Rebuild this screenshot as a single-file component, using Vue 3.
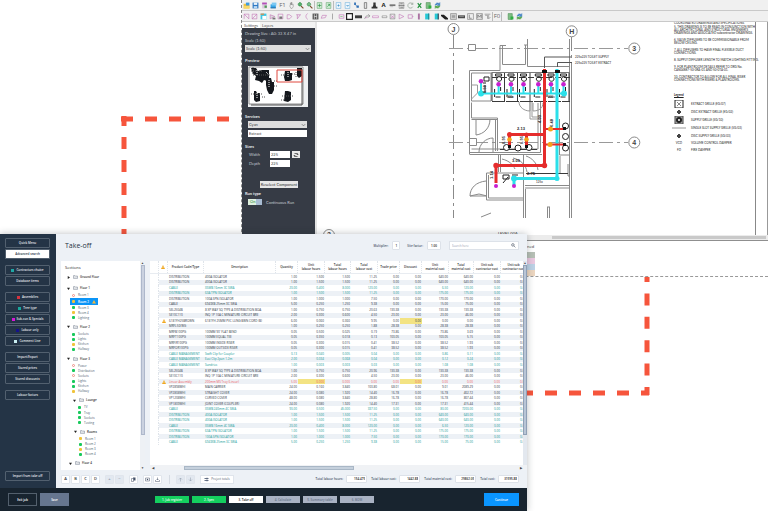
<script setup>
const fileTools = [
  { n: 'Open', s: [['M1 3h4l1 2h5v6H1z', '#f3c33c'], ['M5 1h6v5H5z', '#3c9be0'], ['M2 7h9v4H1z', '#f7d96a']] },
  { n: 'Save', s: [['M1 1h10v10H1z', '#2f79c4'], ['M3 1h6v4H3z', '#e8f2fb'], ['M3 7h6v4H3z', '#bcd9f2']] },
  { n: 'Sheet', s: [['M2 1h8v10H2z', '#d9c8dc'], ['M2 1h8v3H2z', '#b44fb8'], ['M6 6h4v4H6z', '#4e9a55']] },
  { n: 'Project folder', s: [['M1 4h9v6H1z', '#37a5e6'], ['M3 1h8v5H3z', '#7cc8f2'], ['M1 9h9v2H1z', '#1c6fae']] },
  { n: 'F1', t: 'F1' },
  { n: 'Pan', s: [['M4 5V2h1v3V1h1v4V1h1v4l2-1v4l-2 3H5L3 7z', 'none', '#8d8d8d']] },
  { n: 'Zoom in', s: [['M5 1a3 3 0 1 0 .1 0z', '#55b169', '#2b7d42'], ['M7 7l4 4', 'none', '#7b4a2a', 2]] },
  { n: 'Zoom out', s: [['M5 1a3 3 0 1 0 .1 0z', '#7cc08a', '#2b7d42'], ['M7 7l4 4', 'none', '#7b4a2a', 2]], sep: 1 },
  { n: 'Import', s: [['M2 1h8v10H2z', '#cdebd2', '#6aa974'], ['M3 6h6M6 3v6', 'none', '#1f8a3a']] },
  { n: 'Export', s: [['M2 1h8v10H2z', '#cdebd2', '#6aa974'], ['M4 8l4-4M5 4h3v3', 'none', '#1f8a3a']], sep: 1 },
  { n: 'Page', s: [['M2 1h8v10H2z', '#eef7fd', '#6fb2dd'], ['M4 6h4M6 4v4', 'none', '#2d86c4']] },
  { n: 'Next page', s: [['M2 1h8v10H2z', '#eef7fd', '#6fb2dd'], ['M4 6h4l-2 2', 'none', '#2d86c4']] },
  { n: 'Trace', s: [['M2 1h3v4H2zM6 6h4v4H6z', '#2f6fb4'], ['M4 5l4 3', 'none', '#2f6fb4']] },
  { n: 'Column', s: [['M4 1h4v10H4z', '#e3e3e3', '#4a4a4a']] },
  { n: 'Stamp', s: [['M4 1h4v4l1 3h2v3H1V8h2l1-3z', '#333']] },
  { n: 'Text', t: 'A', b: 1 },
  { n: 'Keyboard', s: [['M1 4h10v3H1z', '#777'], ['M2 8h5', 'none', '#aaa']] },
  { n: 'Print', s: [['M2 1h8v10H2z', '#ddd', '#888'], ['M1 6h10M4 3h4M4 9h5', 'none', '#555']] },
  { n: 'Refresh', s: [['M10 4A4.500 4.500 0 1 0 10 8M10 1v3H7', 'none', '#7c8f82']] },
  { n: 'Excel', s: [['M3 2l6 8M9 2l-6 8', 'none', '#23913f', 2]] },
  { n: 'Add sheet', s: [['M2 1h7v10H2z', '#7fbf85', '#4d8d54'], ['M6 6h5v5H6z', '#2fae42']] },
  { n: 'Sync', s: [['M2 6a4 4 0 0 1 7-3l1-2v5H6l2-2', '#3f7fc4', '#3f7fc4'], ['M10 6a4 4 0 0 1-7 3l-1 2V7h4L4 8', '#57a84d', '#57a84d']] }
]
const P = '#c06fb4'
const G = '#777'
const duct = [
  [['M2 10V2h8v8M2 2l8 8', 'none', P]], [['M2 10V2h8v8zM2 10l8-8', 'none', P]],
  [['M1 1h10v10H1z', '#3fc8e4'], ['M4 5h7v6H4z', '#fff'], ['M1 1h6v2H1z', '#e8863c']],
  [['M2 3l8 3-8 4z', '#ddd', P], ['M6 8h5v3H6z', G]], [['M2 2h8v8H2z', 'none', P], ['M4 6h5v4H4z', G]],
  [['M2 3h4l4 3-4 4H2z', 'none', P]], [['M2 3h8M4 3v7l5-7', 'none', P]], [['M8 1C4 3 4 8 8 11', 'none', P]],
  [['M1 1h10v10H1z', '#555'], ['M4 2v8M8 2v8M4 6h4', 'none', '#fff']],
  [['M2 9l2-5h7l-2 4z', 'none', P]], [['M6 1v10', 'none', G]], [['M2 3h8v6H2z', 'none', P], ['M4 6h4', 'none', '#6a6']],
  [['M1 1h10v10H1z', '#fff', '#222', 2]], [['M0 4h12v5H0z', '#3c3c3c']],
  [['M1 10l3-5h6M7 2l3 3-3 3', 'none', G], ['M2 8h4', 'none', P]], [['M1 5h10v3H1z', '#fff', P]],
  [['M2 5h8v3H2z', '#fff', G]], [['M2 2h8v8H2z', 'none', G], ['M3 4l6 5M3 9l6-5', 'none', P]],
  [['M2 2l8 4-8 4z', 'none', P]], [['M2 3h7v6H2zM9 6h2', 'none', P]], [['M5 1h3v10H5z', P], ['M7 1v10', 'none', G]],
  [['M2 1h7v10H2z', '#27c9d6'], ['M7 1h2v10H7z', '#238a94']], [['M3 1h6v10H3z', '#27c9d6'], ['M8 1h2v10H8z', '#345']],
  [['M0 3h5l7 6v2H7L0 5z', '#1f1f1f']], [['M1 1h10v10H1z', '#ddd', G], ['M3 4h6M3 6h6M3 8h6', 'none', G]],
  [['M0 4h12v5H0z', '#4c4c4c'], ['M2 6h8', 'none', '#aaa']], [['M1 1h10v10H1z', '#eee', G], ['M4 3v6h4', 'none', '#555']],
  [['M1 1h10v10H1z', '#e4e4e4', G], ['M3 9V3l3 4 3-4v6', 'none', '#555']], [['M1 2h10M2 4h4v6M8 3v7l3-3', 'none', G]]
]
const exportTools = [
  { n: 'Export list', s: [['M2 1h7v10H2z', '#7fbf85', '#4d8d54'], ['M6 6h5v5H6z', '#2fae42']] },
  { n: 'Update', s: [['M2 6a4 4 0 0 1 7-3l1-2v5H6l2-2', '#3f7fc4', '#3f7fc4'], ['M10 6a4 4 0 0 1-7 3l-1 2V7h4L4 8', '#57a84d', '#57a84d']] }
]

const notes = [
  ['COORDINATED DRAWINGS AND SPECIFICATIONS.'],
  ['5. THIS DRAWING IS TO BE READ IN CONJUNCTION WITH', 'ALL ARCHITECTURAL AND STRUCTURAL ENGINEER\'S', 'DRAWINGS AND ASSOCIATED subcontractor DRAWINGS.'],
  ['6. VALVE DIFFUSERS TO BE COMMISSIONABLE FROM', 'BELOW CEILING.'],
  ['7. ALL DIFFUSERS TO HAVE FINAL FLEXIBLE DUCT', 'CONNECTIONS.'],
  ['8. SUPPLY DIFFUSER LENGTH TO MATCH LIGHTING FITTING.'],
  ['9. FOR PLANTROOM DETAILS REFER TO DRG No.', 'CAN04887-50-0RA-01 AND 50-0TA-01.'],
  ['10. CONTRACTOR TO ALLOW FOR ALL FINAL RISER', 'CONNECTIONS WITH RISERS & PLANTROOMS.']
]
const legend = [
  ['box', 'EXTRACT GRILLE (EG/07)'], ['plus', 'DISC EXTRACT GRILLE (EG/02)'], ['star', 'SUPPLY GRILLE (SG/10)'],
  ['slot', 'SINGLE SLOT SUPPLY GRILLE (SG/03)'], ['plus', 'DISC SUPPLY GRILLE (SG/03)'],
  ['VCD', 'VOLUME CONTROL DAMPER'], ['FD', 'FIRE DAMPER']
]
const grilles = [498.6, 511, 523.5, 538.3, 551, 563.5]
const partitions = [492, 504.5, 517.5, 530, 545, 557, 569]

const menu = [
  [{ t: 'Quick Menu' }, { t: 'Advanced search', on: 1 }],
  [{ t: 'Contractors choice', c: '#1fa7a4' }, { t: 'Database items' }],
  [{ t: 'Assemblies', c: '#d5333f' }, { t: 'Tree type', c: '#19a79b' }, { t: 'Sub-con & Specials', c: '#d816d8' }, { t: 'Labour only', c: '#16138c' }, { t: 'Comment Line', c: '#c9eef2' }],
  [{ t: 'Import/Export' }, { t: 'Stored prices' }, { t: 'Stored discounts' }],
  [{ t: 'Labour factors' }]
]
const tree = [
  ['f', 0, 'Ground Floor', 'shut'], ['f', 0, 'Floor 1'], ['r', 0, 'Room 1'], ['sel', 0, 'Room 2'], ['g', 0, 'Room 3'], ['y', 0, 'Room 4'], ['g', 0, 'Lighting'],
  ['f', 0, 'Floor 2'], ['g', 0, 'Sockets'], ['g', 0, 'Lights'], ['y', 0, 'Kitchen'], ['g', 0, 'Hallway'],
  ['f', 0, 'Floor 3'], ['r', 0, 'Power'], ['g', 0, 'Distribution'], ['r', 0, 'Sockets'], ['g', 0, 'Lights'], ['g', 0, 'Kitchen'], ['y', 0, 'Hallway'],
  ['f', 2, 'Lounge'], ['g', 2, 'TV'], ['g', 2, 'Tray'], ['g', 2, 'Sockets'], ['g', 2, 'Testing'],
  ['f', 3, 'Rooms'], ['y', 3, 'Room 1'], ['g', 3, 'Room 2'], ['y', 3, 'Room 3'], ['g', 3, 'Room 4'],
  ['f', 1, 'Floor 4']
]
const heads = ['Product Code/Type', 'Description', 'Quantity', 'Unit\nlabour hours', 'Total\nlabour hours', 'Total\nlabour cost', 'Trade price', 'Discount', 'Unit\nmaterial cost', 'Total\nmaterial cost', 'Unit sub\ncontractor cost', 'Unit sub\ncontractor cost']
const raw = `|DISTRIBUTION|400A ISOLATOR|1.00|1.500|1.500|11.25|0.00|0.00|640.00|640.00
|DISTRIBUTION|400A ISOLATOR|1.00|1.500|1.500|11.25|0.00|0.00|640.00|640.00
t|CABLE|XSWB 16mm 3C SWA|20.00|0.400|8.000|120.00|0.00|0.00|6.50|120.00
t|DISTRIBUTION|63A TPN ISOLATOR|1.00|1.500|1.500|11.25|0.00|0.00|175.00|175.00
|DISTRIBUTION|100A SPN ISOLATOR|1.00|1.000|1.000|7.50|0.00|0.00|170.00|170.00
|CABLE|6943XB 25mm 3C SWA|5.00|0.250|1.250|9.38|0.00|0.00|15.00|75.00
|SEL2504B|8 XP WAY SQ TYPE A DISTRIBUTION BOA|1.00|0.750|0.750|20.63|130.38|0.00|130.38|130.38
|SE10C110|INQ 1P 10A C MINIATURE CIRCUIT BRE|2.00|0.300|0.600|4.50|23.00|0.00|23.00|46.00
w|6181YH25BROWN|6181YH 25MM PVC LUNG BWN CORD (B)|6.00|0.060|0.360|9.95|0.00|*0.00|0.00|0.00
|MRFL50/WG||1.00|0.250|0.250|1.88|28.38|0.00|28.38|28.38
|MRFB100PG|100MM 90' FLAT BEND|0.05|0.500|0.025|0.19|73.86|0.00|73.86|3.69
|MRFT100PG|100MM EQUAL TEE|0.05|0.350|0.018|0.13|103.05|0.00|103.05|5.15
|MRFIR100PG|100MM INSIDE RISER|0.05|0.300|0.015|0.41|38.52|0.00|38.52|1.93
|MRFOR100PG|100MM OUTSIDE RISER|0.05|0.300|0.015|0.41|38.52|0.00|38.52|1.93
t|CABLE MANAGEMENT|Swift Clip for Coupler|0.13|0.040|0.005|0.04|0.00|0.00|0.86|0.11
t|CABLE MANAGEMENT|Easi Clip 2pan 1.2m|2.00|0.034|0.068|0.04|0.00|0.00|0.12|0.24
t|CABLE MANAGEMENT|Sundries|1.00|0.003|0.003|0.03|0.00|0.00|1.08|1.08
|SEL2504B|8 XP WAY SQ TYPE A DISTRIBUTION BOA|1.00|0.750|0.750|20.96|130.38|0.00|130.38|130.38
|SE10C110|INQ 1P 10A C MINIATURE CIRCUIT BRE|2.00|0.300|0.600|4.50|23.00|0.00|23.00|46.00
e|Linear Assembly|200mm MS Tray (Linear)|5.00|*0.000|0.000|0.00|0.00|*0.00|0.00|0.00
|VP2898WHI|MAIN CARRIER|24.00|0.160|3.840|103.80|68.01|0.00|9.01|2089.29
|VP2808WHI|STRAIGHT COVER|24.00|0.080|1.920|14.40|16.78|0.00|16.78|402.72
|VP1208WHI|CURVED COVER|48.00|0.080|3.840|28.80|16.78|0.00|16.78|807.44
|VP1809WHI|JOINT COVER (COUPLER)|24.00|0.080|1.920|14.40|17.31|0.00|17.31|415.44
t|CABLE|XSWB 240mm 4C SWA|90.00|0.500|45.000|337.50|0.00|0.00|80.00|7200.00
t|DISTRIBUTION|400A ISOLATOR|1.00|1.500|1.500|11.25|0.00|0.00|640.00|640.00
t|DISTRIBUTION|400A ISOLATOR|1.00|1.500|1.500|11.25|0.00|0.00|640.00|640.00
t|CABLE|XSWB 16mm 4C SWA|20.00|0.400|8.000|120.00|0.00|0.00|6.50|120.00
t|DISTRIBUTION|63A TPN ISOLATOR|1.00|1.500|1.500|11.25|0.00|0.00|175.00|175.00
t|DISTRIBUTION|100A SPN ISOLATOR|1.00|1.000|1.000|7.50|0.00|0.00|170.00|170.00
t|CABLE|6943XB 25mm 3C SWA|5.00|0.250|1.250|9.38|0.00|0.00|15.00|75.00`
const rows = raw.split('\n').map((line) => {
  const [kind, ...cells] = line.split('|')
  return { kind, cells: [...cells, '0.00', '0.00'] }
})
const totals = [['Total labour hours:', '154.475'], ['Total labour cost:', '1442.88'], ['Total material cost:', '29862.05'], ['Total cost:', '31595.88']]
const steps = [['1. Job register', 'done'], ['2. Spec', 'done'], ['3. Take off', 'now'], ['4. Calculate', ''], ['5. Summary table', ''], ['6. BOM', '']]
</script>

<template>
  <main class="stage">
    <svg class="frame" width="530" height="280" viewBox="0 0 530 280" aria-hidden="true">
      <g fill="none" stroke="#f6553c" stroke-width="5">
        <path d="M0 3H525" stroke-dasharray="12 12" stroke-dashoffset="0" />
        <path d="M3 0V280" stroke-dasharray="12 11" stroke-dashoffset="2" />
        <path d="M528 277H0" stroke-dasharray="12 12" stroke-dashoffset="4" />
        <path d="M526 279V0" stroke-dasharray="12 11.400" stroke-dashoffset="4" />
      </g>
    </svg>

    <section class="cad">
      <div class="bar">
        <template v-for="k in fileTools" :key="k.n">
          <button class="tool" :class="{ sep: k.sep }" :aria-label="k.n">
            <span v-if="k.t" class="glyph" :class="{ heavy: k.b }">{{ k.t }}</span>
            <svg v-else viewBox="0 0 12 12"><path v-for="(p, i) in k.s" :key="i" :d="p[0]" :fill="p[1]" :stroke="p[2] || 'none'" :stroke-width="p[3] || 1" /></svg>
          </button>
        </template>
      </div>
      <div class="bar">
        <div class="ducts">
          <button v-for="(s, j) in duct" :key="j" class="tool" :aria-label="'Duct tool ' + (j + 1)">
            <svg viewBox="0 0 12 12"><path v-for="(p, i) in s" :key="i" :d="p[0]" :fill="p[1]" :stroke="p[2] || 'none'" :stroke-width="p[3] || 1" /></svg>
          </button>
        </div>
        <button class="tool boxed"><span class="glyph">F0</span></button>
        <button v-for="k in exportTools" :key="k.n" class="tool" :aria-label="k.n">
          <svg viewBox="0 0 12 12"><path v-for="(p, i) in k.s" :key="i" :d="p[0]" :fill="p[1]" :stroke="p[2] || 'none'" /></svg>
        </button>
      </div>

      <div class="work">
        <aside class="settings">
          <div class="tabs"><button class="tab on">Settings</button><button class="tab">Layers</button></div>
          <form class="panel" @submit.prevent>
            <p>Drawing Size : A0: 33 X 47 in</p>
            <label for="scale">Scale (1:50)</label>
            <span class="drop wide"><select id="scale"><option>Scale (1:50)</option></select><svg viewBox="0 0 6 4"><path d="M1 1l2 2 2-2" fill="none" stroke="#777" /></svg></span>
            <h3 class="mt">Preview</h3>
            <svg class="thumb" viewBox="0 0 60 41">
              <path d="M0 0h60v41H0z" fill="#eef0f2" /><path d="M1 1h54v37H1z" fill="#fff" stroke="#8c8c8c" />
              <path d="M3 39h51M54 3v36" stroke="#555" fill="none" />
              <g fill="#15181d">
                <path d="M3 2h5l2 3 4-1 7 0v9l-2 2-3-1-2 3-3-2-4-1 1-4-3-2zM18 12h5l1 4h2v8l-2 4h-3l-2-4-1-5z" />
                <path d="M37 5h5v2h2v7l-3 1h-4l-1-4zM49 2h5v8l-3 2-2-2zM6 25h2l1 2h3v8l-4 1-2-2zM37 25h3l3 1v8l-3 2-4-1z" />
              </g>
              <g stroke="#555" stroke-width="1" stroke-dasharray="1 1"><path d="M3 5h12M5 9h17M26 15h4M26 20h4M33 9h3M44 8h4M3 28h12M34 30h12M33 34h3M14 31h3M48 6v6M5 1v8" /></g>
              <path d="M18 6l3 3M9 4v6M40 6v6M9 27v5M21 14v8" stroke="#fff" stroke-dasharray="1 1" />
              <path d="M29 4h25v12H29z" fill="none" stroke="#e0483e" />
            </svg>
            <h3 class="services">Services</h3>
            <span class="drop"><select aria-label="Colour"><option>Cyan</option></select><svg viewBox="0 0 6 4"><path d="M1 1l2 2 2-2" fill="none" stroke="#777" /></svg></span>
            <input class="line" aria-label="Service" value="Extract" />
            <h3 class="mt">Sizes</h3>
            <div class="size"><label for="w">Width</label><input id="w" value="225" /><button class="swap" aria-label="Swap"><svg viewBox="0 0 8 8"><path d="M2 2h4v2M6 6H2V4M5 3l1 1 1-1M1 5l1-1 1 1" fill="none" stroke="#444" /></svg></button></div>
            <div class="size"><label for="d">Depth</label><input id="d" value="225" /></div>
            <button class="reselect">Reselect Component</button>
            <h3>Run type</h3>
            <div class="run"><button class="toggle" aria-labelledby="runl">On</button><span id="runl">Continuous Run</span></div>
          </form>
        </aside>

        <div class="sheet">
          <svg class="plan" width="350" height="214" viewBox="317 21 350 214">
            <g fill="none" stroke="#8a8a8a" stroke-width="1">
              <g stroke-dasharray="14 4 3 4">
                <path d="M453.500 34V217M571.500 36V217" stroke="#8a8a8a" /><path d="M449 47.500H628M449 141.500H628" stroke="#999" />
              </g>
              <g fill="#fff"><circle cx="453.500" cy="28" r="5.500" /><circle cx="571.700" cy="30.300" r="5.500" /><circle cx="634.300" cy="47.500" r="5.500" /><circle cx="634.300" cy="141.500" r="5.500" /><circle cx="329" cy="234" r="5.500" /><path d="M468.500 43.500h7v6h-7zM469.500 137.500h7v7h-7z" /></g>
              <path d="M506 44.500H500V69.500H469.500V153M502.500 44.500V63.500H525.500V44M527.500 38V65.500H570M524 44h3M569.500 38V217M571.500 66V217" />
              <path d="M469.500 151.500H540.500V101M471.500 148H538V102M469.500 153.500H542M471.500 72H491V100H471.500zM471.500 101.500V117H497.500V150M495.500 119V150M471.500 118.500H497" />
              <path d="M471.500 84h6v8l-6 6M519 101c0 5 5 9 11 9v-9M533 102v8c6 0 10-3 10-8M530 101V118H540M532 101V116H541" stroke="#999" />
              <path d="M476 118v16c8-1 14-7 14-16M479 151c0-8 7-14 14-14v14M486.500 172V199H523M488.500 174V197H523M486.500 172H523M523.500 153V217M525.500 188V217M500.500 153V171M498.500 153V171M525 184.500H570M525 187H570M470 195c0-8 6-14 16-15M470 195h17l-8-2-9 2M513 157c8 2 13 7 14 14M526 155c6 2 11 7 12 14M547.500 206V217M549.500 206V217M547 206h3M481 216l10-4M502 158c8 2 11 6 13 10M559.500 118V154M559.500 154H570M560 155V172M568 163v12h2" />
              <path d="M544.500 67V56H571M557.500 66V61.500H572" stroke="#555" />
            </g>
            <g stroke="#3a3a3a" fill="none">
              <path v-for="x in partitions" :key="x" :d="`M${x} 71V100`" />
              <path d="M492 71.500H570" stroke="#777" /><path d="M492 76.500H570" stroke-dasharray="6 3" /><path d="M492 100.500H570" stroke-dasharray="13 1" />
              <path d="M526 172.500H568M500 148.500H537" />
              <g stroke="#222"><path v-for="x in grilles" :key="x" :d="`M${x - 3} 73h6v2h-6zM${x - 2} 78c0-3 5-3 5 0s-5 3-5 0M${x + 2} 86v4M${x - 4} 88v8M${x - 3} 96h5`" /></g>
              <path d="M484 76h5v4h-5zM485 84v8M483 82h3M503 174h6v4h-6zM512 174h6M503 182l5-6" stroke="#222" />
              <g stroke="#222" fill="#fff"><circle cx="506.500" cy="146.500" r="3" /><circle cx="518" cy="147" r="3" /><circle cx="529" cy="146.500" r="3" /><circle cx="565.500" cy="125" r="3" /><circle cx="565.500" cy="135.500" r="3" /><circle cx="565.500" cy="147" r="3" /></g>
            </g>
            <g fill="none" stroke="#2be0ea" stroke-width="3">
              <path d="M557 68V177.500H514V185" /><path d="M481 80V92.500H566" stroke-width="2" />
              <path v-for="x in grilles" :key="x" :d="`M${x} 84V92`" stroke-width="2" />
            </g>
            <g fill="#2be0ea"><circle cx="481" cy="92.500" r="3" /><circle cx="514" cy="177.500" r="3" /><circle cx="557" cy="177.500" r="2.500" /><circle cx="564" cy="92.500" r="3" /></g>
            <g fill="none" stroke="#e52c2c" stroke-width="3"><path d="M544.500 68V164.500H496V182M544 133.500H509.500V145M526.500 133V145" /><path d="M545 128H565M545 143.500H565" stroke-width="2" /></g>
            <g fill="#e52c2c"><circle cx="496" cy="164.500" r="2.700" /><circle cx="544.500" cy="164.500" r="2.700" /><circle cx="509.500" cy="133.500" r="2.500" /><circle cx="526.500" cy="133.500" r="2" /></g>
            <g fill="#f5a21b"><circle cx="509.500" cy="138.500" r="2.300" /><circle cx="526.500" cy="138.500" r="2.300" /><circle cx="550.500" cy="128" r="2.500" /><circle cx="550" cy="143.500" r="2.500" /></g>
            <g fill="#111"><path d="M508 144h3v3h-3zM525 144h3v3h-3zM563 126h3v3h-3zM563 142h3v3h-3zM542 69h5v3h-5zM555 69h5v3h-5z" /></g>
            <g fill="#c81fd0"><circle cx="481" cy="80.300" r="2.300" /><circle v-for="x in grilles" :key="x" :cx="x" cy="83.300" r="2.300" /><circle cx="496" cy="185" r="2" /><circle cx="514" cy="185" r="2" /></g>
            <g class="bubble"><text x="453.500" y="31">J</text><text x="571.700" y="33">H</text><text x="634.300" y="50">3</text><text x="634.300" y="144">4</text><text x="329" y="236">2</text></g>
            <g class="dims"><text x="521" y="129">2.13</text><text x="516" y="161">3.09</text><text x="531" y="174">2.75</text></g>
            <g class="dims" transform="rotate(-90 541 118)"><text x="541" y="118">4.03</text></g>
            <g class="dims" transform="rotate(-90 553 122)"><text x="553" y="122">6.48</text></g>
            <g class="dims" transform="rotate(-90 493 174)"><text x="493" y="174">1.14</text></g>
            <g class="dims" transform="rotate(-90 486 88)"><text x="486" y="88">0.50</text></g>
            <g class="dims" transform="rotate(-90 505 139)"><text x="505" y="139">0.95</text></g>
            <g class="dims" transform="rotate(-90 523 139)"><text x="523" y="139">0.95</text></g>
            <g class="tag"><text x="575" y="57">225x225 TOILET SUPPLY</text><text x="575" y="63">225x225 TOILET EXTRACT</text><text x="536" y="182">125x</text><text x="507" y="97">200x</text><text x="548" y="97">200x</text></g>
            <text class="level" x="498" y="234">LEVEL 00A</text>
          </svg>
          <div class="notes">
            <p v-for="(n, i) in notes" :key="i"><span v-for="l in n" :key="l">{{ l }}</span></p>
            <h4>Legend</h4>
            <dl>
              <div v-for="(l, i) in legend" :key="i">
                <dt>
                  <svg v-if="l[0] === 'box'" viewBox="0 0 14 8"><path d="M3 0h8v8H3z" fill="#fff" stroke="#222" /><path d="M5 2l4 4M9 2L5 6" stroke="#888" /></svg>
                  <svg v-else-if="l[0] === 'star'" viewBox="0 0 14 8"><path d="M3 0h8v8H3z" fill="#aaa" stroke="#444" /><circle cx="7" cy="4" r="3" fill="#222" /><circle cx="7" cy="4" r="1" fill="#fff" /></svg>
                  <svg v-else-if="l[0] === 'plus'" viewBox="0 0 14 8"><path d="M7 2v4M5 4h4" stroke="#444" stroke-width="2" /></svg>
                  <svg v-else-if="l[0] === 'slot'" viewBox="0 0 14 8"><path d="M0 3h14v2H0z" fill="#ccc" stroke="none" /></svg>
                  <template v-else>{{ l[0] }}</template>
                </dt>
                <dd>{{ l[1] }}</dd>
              </div>
            </dl>
          </div>
          <div class="edge"></div>
        </div>
      </div>
      <div class="hscroll"><i></i></div>
      <div class="below"><span>ned</span><i class="a"></i><i class="b"></i><i class="c"></i><i class="d"></i></div>
    </section>

    <section class="takeoff">
      <nav class="side">
        <div v-for="(g, i) in menu" :key="i" class="group">
          <button v-for="m in g" :key="m.t" :class="{ on: m.on }"><i v-if="m.c" :style="{ background: m.c }"></i>{{ m.t }}</button>
        </div>
        <button class="last">Import from take off</button>
      </nav>

      <div class="body">
        <header>
          <h1>Take-off</h1>
          <label for="mul">Multiplier:</label><input id="mul" class="mul" value="1" />
          <label for="sf">Site factor:</label><input id="sf" class="sf" value="1.00" />
          <div class="search"><input aria-label="Search" placeholder="Search here" /><svg viewBox="0 0 8 8"><circle cx="3" cy="3" r="2" fill="none" stroke="#3f4a5c" /><path d="M5 5l2 2" stroke="#3f4a5c" /></svg></div>
        </header>

        <div class="content">
          <div class="sections">
            <div class="treebox">
              <h2>Sections</h2>
              <ul>
                <li v-for="(n, i) in tree" :key="i" :class="['k-' + n[0], 'in' + n[1]]">
                  <template v-if="n[0] === 'f'">
                    <svg class="arrow" viewBox="0 0 4 4"><path :d="n[3] ? 'M1 0l3 2-3 2z' : 'M0 1h4L2 4z'" fill="#222" /></svg>
                    <svg class="folder" viewBox="0 0 10 8"><path d="M1 7V1h3l1 1h4v5z M1 4h8" fill="#fff" stroke="#7a8495" /></svg>{{ n[2] }}
                  </template>
                  <span v-else-if="n[0] === 'sel'" class="pick"><i></i>{{ n[2] }}<svg viewBox="0 0 8 8"><path d="M4 0l4 7H0z" fill="#f6b73c" /></svg></span>
                  <template v-else><i></i>{{ n[2] }}</template>
                </li>
              </ul>
            </div>
            <div class="vbar"><b>▲</b><i></i><b>▼</b></div>
          </div>

          <div class="gridbox">
            <div class="gridtop">
              <table>
                <thead>
                  <tr><th></th><th><svg class="warn" viewBox="0 0 8 8"><path d="M4 0l4 8H0z" fill="#f0a71e" /><path d="M4 3v3" stroke="#fff" /></svg></th><th v-for="(h, i) in heads" :key="i">{{ h }}</th></tr>
                </thead>
                <tbody>
                  <tr v-for="(r, i) in rows" :key="i" :class="'r' + r.kind">
                    <td></td>
                    <td><svg v-if="r.kind === 'w' || r.kind === 'e'" class="warn" viewBox="0 0 8 8"><path d="M4 0l4 8H0z" fill="#f0a71e" /><path d="M4 3v3" stroke="#fff" /></svg></td>
                    <td v-for="(c, j) in r.cells" :key="j" :class="{ flag: c[0] === '*' }">{{ c.replace('*', '') }}</td>
                  </tr>
                </tbody>
              </table>
              <div class="vbar slim"><b>▲</b><i></i></div>
            </div>
            <div class="hbar"><b>◀</b><i></i><b>▶</b></div>
          </div>
        </div>

        <div class="tools">
          <div class="set"><button>A</button><button>B</button><button>C</button><button>D</button></div>
          <div class="set"><button disabled>+</button><button disabled>−</button></div>
          <div class="set"><button aria-label="Copy"><svg viewBox="0 0 10 10"><path d="M4 1h5v6H4z" fill="#465268" /><path d="M1 3h4v6H1z" fill="#fff" stroke="#465268" /></svg></button></div>
          <div class="set"><button aria-label="Snapshot"><svg viewBox="0 0 10 10"><path d="M1 2h8v6H1z" fill="#fff" stroke="#465268" /><circle cx="5" cy="5" r="1.500" fill="#465268" /></svg></button><button aria-label="Download"><svg viewBox="0 0 10 10"><path d="M5 1v5M3 4l2 2 2-2M1 6v3h8V6" fill="none" stroke="#465268" /></svg></button></div>
          <div class="set arrows"><button disabled aria-label="Up"><svg viewBox="0 0 10 10"><path d="M5 9V2M2 5l3-3 3 3" fill="none" stroke="#8d98a9" /></svg></button><button disabled aria-label="Down"><svg viewBox="0 0 10 10"><path d="M5 1v7M2 5l3 3 3-3" fill="none" stroke="#8d98a9" /></svg></button></div>
          <button class="ptotals"><svg viewBox="0 0 10 10"><path d="M1 2h8v2H1zM1 6h8v2H1z" fill="#69758a" /><path d="M6 1v8" stroke="#465268" /></svg>Project totals</button>
          <div class="totals">
            <template v-for="(t, i) in totals" :key="i"><label :for="'t' + i">{{ t[0] }}</label><input :id="'t' + i" :value="t[1]" readonly /></template>
          </div>
        </div>
      </div>

      <footer>
        <button class="exit">Exit job</button><button class="save">Save</button>
        <ol><li v-for="s in steps" :key="s[0]"><button :class="s[1]">{{ s[0] }}</button></li></ol>
        <button class="go">Continue</button>
      </footer>
    </section>
  </main>
</template>

<style>
body { margin: 0; background: #fff; }
</style>

<style scoped>
* { box-sizing: border-box; }
.stage { position: relative; min-height: 100vh; overflow: hidden; font: 3px/4px "Open Sans", "Noto Sans", sans-serif; color: #2b3442; }
h1, h2, h3, h4, p, ul, ol, dl, dd { margin: 0; padding: 0; }
ul, ol { list-style: none; }
button, input, select { font-family: inherit; font-size: 3px; line-height: 4px; color: inherit; margin: 0; padding: 0; border: 0; border-radius: 0; background: none; min-width: 0; }
svg { display: block; }
.frame { position: absolute; left: 121px; top: 116px; }

/* drawing window */
.cad { position: absolute; left: 241px; top: 0; right: 0; background: #fff; border-left: 1px dashed #8a8a8a; border-bottom: 1px dashed #999; height: 277px; display: flex; flex-direction: column; }
.bar { display: flex; align-items: center; height: 11px; background: #f0f0f0; border-bottom: 1px solid #c9c9c9; flex: none; }
.tool { width: 9px; height: 9px; display: grid; place-items: center; flex: none; }
.tool svg { width: 7px; height: 7px; }
.sep { border-right: 1px solid #bbb; width: 10px; }
.ducts { display: flex; width: 250px; }
.ducts .tool { flex: 1; }
.boxed { border-left: 1px solid #bbb; border-right: 1px solid #bbb; margin-right: 4px; width: 10px; }
.glyph { font-size: 6px; line-height: 8px; color: #666; }
.heavy { font-weight: 700; color: #222; }
.work { display: flex; flex: 1; min-height: 0; }
.settings { width: 75px; display: flex; flex-direction: column; background: #f3f3f3; border-right: 2px solid #e4e4e4; flex: none; font-family: Lato, "Open Sans", sans-serif; }
.tabs { display: flex; height: 6px; }
.tab { padding: 0 2px; font-size: 4px; line-height: 5px; color: #555; }
.tab.on { background: #fff; }
.panel { flex: 1; background: #363b45; color: #c3c8cf; padding: 3px 2px 0 3px; display: flex; flex-direction: column; align-items: flex-start; font-size: 4px; line-height: 5px; white-space: nowrap; }
.panel h3 { font-size: 4px; line-height: 5px; font-weight: 700; color: #e8eaee; }
.panel p { margin-bottom: 2px; }
.panel input, .panel select { font-size: 4px; line-height: 5px; color: #444; }
.drop { display: flex; align-items: center; width: 59px; height: 7px; margin: 2px 0 1px 3px; background: #dedede; }
.drop select { appearance: none; flex: 1; padding-left: 1px; height: 7px; }
.drop svg { width: 5px; height: 4px; margin-right: 1px; }
.drop.wide { width: 66px; margin-left: 0; }
.mt { margin-top: 5px; margin-bottom: 1px; }
.thumb { width: 60px; height: 41px; margin: 2px 0 7px 3px; }
.line { width: 59px; height: 7px; margin: 1px 0 2px 3px; background: #fff; padding-left: 1px; }
.size { display: flex; align-items: center; gap: 2px; padding-left: 4px; height: 7px; margin: 1px 0; }
.size label { width: 19px; }
.size input { width: 20px; height: 7px; background: #fff; padding-left: 1px; }
.swap { width: 8px; height: 7px; background: #e8e8e8; display: grid; place-items: center; }
.swap svg { width: 6px; height: 6px; }
.reselect { align-self: center; font-size: 4px; line-height: 7px; width: 38px; background: #e6e6e6; color: #333; margin: 13px 0 3px; }
.run { display: flex; align-items: center; gap: 4px; margin: 3px 0 0 3px; }
.toggle { width: 14px; height: 6px; text-align: left; padding-left: 2px; font-size: 4px; color: #1f8a3a; background: linear-gradient(90deg, #dff0e0 60%, #a9bcd3 60%); }
.sheet { flex: 1; min-width: 0; display: flex; overflow: hidden; background: #fff; }
.plan { flex: none; }
.bubble text { font: 700 7px "Liberation Sans", sans-serif; text-anchor: middle; fill: #444; }
.dims text { font: 700 4px "Liberation Sans", sans-serif; text-anchor: middle; fill: #222; }
.tag text { font: 3px Lato, sans-serif; fill: #222; }
.level { font: 4px Lato, sans-serif; fill: #333; }
.notes { flex: 1; min-width: 0; padding-left: 7px; font: 3px/3px Lato, sans-serif; color: #222; white-space: nowrap; display: flex; flex-direction: column; gap: 4px; }
.notes p:first-child { margin-bottom: -3px; }
.notes span { display: block; }
.notes h4 { font: 700 3px/3px Lato, sans-serif; text-decoration: underline; margin-top: 8px; }
.notes dl { display: flex; flex-direction: column; height: 54px; margin-top: -1px; }
.notes dl div { flex: 1; display: flex; align-items: center; gap: 5px; }
.notes dt { width: 14px; margin-left: -2px; text-align: center; }
.notes dt svg { width: 14px; height: 8px; }
.edge { width: 13px; border-left: 1px solid #888; border-right: 1px solid #999; flex: none; }
.hscroll { height: 6px; background: #ececec; border-bottom: 1px solid #8f8f8f; padding: 1px 2px 1px 310px; flex: none; }
.hscroll i { display: block; height: 3px; background: #c9c9c9; }
.below { height: 35px; flex: none; padding: 3px 0 0 285px; display: flex; flex-direction: column; font-size: 4px; line-height: 5px; color: #333; }
.below span { margin-bottom: 3px; }
.below i { width: 8px; height: 6px; }
.a { background: #b7c0b6; } .b { background: #eac9e0; } .c { background: #bdd2e6; } .d { background: #ecd6c0; }

/* take-off window */
.takeoff { position: absolute; left: 0; top: 234px; bottom: 0; width: 527px; display: grid; grid-template: minmax(0, 1fr) 23px / 56px minmax(0, 1fr); background: #edf1f6; box-shadow: 0 0 7px rgba(30, 40, 50, 0.3); }
.side { background: #243446; padding: 4px 6px 7px 5px; display: flex; flex-direction: column; gap: 6px; }
.group { display: flex; flex-direction: column; gap: 1px; }
.side button { height: 10px; border: 1px solid #52606f; border-radius: 1px; color: #e4e8ed; display: flex; align-items: center; justify-content: center; gap: 2px; font-weight: 600; white-space: nowrap; }
.side button.on { background: #fff; color: #243446; }
.side i { width: 3px; height: 3px; }
.side .last { margin-top: auto; }
.body { display: flex; flex-direction: column; min-width: 0; }
header { height: 27px; padding: 0 8px 4px 9px; display: flex; align-items: center; gap: 4px; }
h1 { font-size: 7px; line-height: 9px; font-weight: 400; color: #263244; margin-right: auto; }
header input, .totals input { background: #fff; border: 1px solid #dde2e9; border-radius: 1px; height: 9px; text-align: center; color: #222; font-weight: 600; }
header label, .totals label { font-weight: 600; color: #4c586a; white-space: nowrap; }
.mul { width: 8px; margin-right: 3px; }
.sf { width: 14px; margin-right: 4px; }
.search { width: 70px; height: 9px; background: #fff; border: 1px solid #dde2e9; display: flex; align-items: center; padding: 0 2px; }
.search input { flex: 1; border: 0; height: 7px; text-align: left; font-weight: 400; }
.search input::placeholder { color: #98a2b0; }
.search svg { width: 5px; height: 5px; }
.content { flex: 1; display: flex; gap: 5px; padding-left: 5px; min-height: 0; }
.sections { width: 84px; background: #fff; display: flex; flex: none; }
.treebox { flex: 1; padding: 4px 0 2px 4px; display: flex; flex-direction: column; }
h2 { font-size: 4px; line-height: 5px; font-weight: 400; color: #222; margin-bottom: 1px; }
.treebox ul { flex: 1; display: flex; flex-direction: column; }
li[class*="k-"] { flex: 11 1 0; min-height: 0; display: flex; align-items: center; gap: 3px; padding-left: 7px; color: #4c5a6e; white-space: nowrap; }
li.k-f { flex-grow: 19; padding: 2px 0 0 2px; gap: 2px; font-weight: 600; color: #333; }
li.k-sel { flex-grow: 15; padding-left: 5px; }
li.in1 { margin-left: 2px; } li.in2 { margin-left: 6px; } li.in3 { margin-left: 7px; }
li i { width: 3px; height: 3px; background: #18c95b; border-radius: 1px; flex: none; }
.k-y i, .pick i { background: #f0c33a; }
.k-r i { background: #fff; border: 1px solid #ef8d84; border-radius: 2px; }
.arrow { width: 3px; height: 3px; margin-right: 1px; }
.folder { width: 5px; height: 4px; }
.pick { display: flex; align-items: center; gap: 3px; background: #0b95f7; color: #fff; height: 7px; padding: 0 2px; font-weight: 600; }
.pick svg { width: 4px; height: 4px; }
.vbar { width: 5px; background: #eef1f5; display: flex; flex-direction: column; align-items: center; }
.vbar b, .hbar b { font-size: 3px; line-height: 4px; color: #444; flex: none; }
.vbar i { width: 4px; height: 170px; background: #cbd2e0; border: 1px solid #aeb8cb; margin-bottom: auto; }
.gridbox { flex: 1; display: flex; flex-direction: column; min-width: 0; background: #fff; }
.gridtop { flex: 1; display: flex; min-height: 0; position: relative; }
.vbar.slim { position: absolute; right: 0; top: 0; bottom: 0; width: 4px; background: #e3e8ef; }
.slim i { width: 4px; background: #b9c5d6; border-color: #8fa0b6; }
table { flex: 1; min-width: 0; display: flex; flex-direction: column; }
thead, tbody { display: flex; flex-direction: column; }
tbody { height: 171px; }
tr { display: grid; grid-template-columns: 9fr 9fr 36fr 72fr 22fr 27fr 26fr 27fr 22fr 22fr 27fr 25fr 27fr 26fr; }
thead tr { height: 13px; border-bottom: 1px solid #e8ecf1; }
tbody tr { flex: 1 1 0; min-height: 0; }
tbody tr:nth-child(even) td:nth-child(n + 2) { background: #edf1f6; }
th, td { padding: 0; min-width: 0; display: flex; align-items: center; white-space: pre; overflow: hidden; }
th { justify-content: center; text-align: center; font-weight: 600; color: #333; border-right: 1px dotted #dfe4ea; }
td { justify-content: flex-end; padding-right: 1px; }
td:nth-child(2) { justify-content: center; padding: 0; }
td:nth-child(3), td:nth-child(4) { justify-content: flex-start; padding-left: 1px; }
td:first-child { border-right: 1px dotted #dfe4ea; }
.rt { color: #109895; }
.re { color: #ee5b62; }
tbody tr td.flag:nth-child(n) { background: #f3e383; }
.warn { width: 4px; height: 4px; }
.hbar { height: 5px; background: #f0f2f5; display: flex; align-items: center; padding: 0 5px 0 2px; }
.hbar i { width: 170px; height: 4px; background: #c5d0dc; border: 1px solid #a9b7c6; margin: 0 auto 0 30px; }
.tools { height: 18px; display: flex; align-items: center; gap: 5px; padding: 0 8px 0 5px; }
.set { display: flex; gap: 1px; }
.set button { width: 9px; height: 9px; background: #fff; border: 1px solid #e0e5ec; border-radius: 1px; font-size: 4px; font-weight: 600; display: grid; place-items: center; color: #333; }
.set button:disabled { background: #e2e8f0; color: #8d98a9; }
.set svg, .ptotals svg { width: 5px; height: 5px; }
.arrows { border-left: 1px solid #d5dbe3; padding-left: 6px; margin-left: 2px; }
.ptotals { height: 9px; width: 34px; background: #fff; border: 1px solid #e0e5ec; display: flex; align-items: center; justify-content: center; gap: 2px; color: #4f5b70; white-space: nowrap; }
.totals { margin-left: auto; display: flex; align-items: center; gap: 3px; }
.totals input { width: 21px; text-align: right; padding-right: 1px; height: 8px; }
.totals label:not(:first-child) { margin-left: 1px; }
footer { grid-column: 1 / -1; background: #18242f; display: flex; align-items: center; padding: 0 8px; gap: 3px; }
footer button { height: 13px; font-weight: 600; color: #fff; }
.exit { width: 29px; border: 1px solid #53606d; }
.save { width: 29px; background: #66768f; }
footer ol { display: flex; gap: 3px; margin: 0 auto 0 83px; }
footer li button { width: 34px; height: 7px; display: block; background: #a9b2c3; color: #67748a; }
footer li .done { background: #14cf5f; color: #e6fff0; }
footer li .now { background: #fff; color: #222; }
.go { width: 35px; background: #0a95ff; }
</style>
